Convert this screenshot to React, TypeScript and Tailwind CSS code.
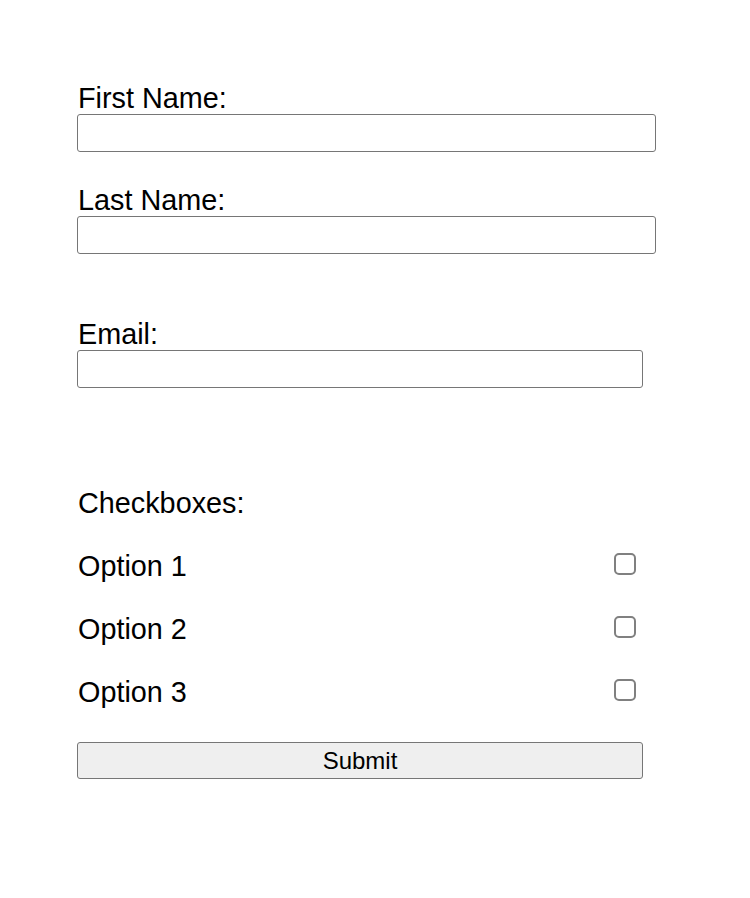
import React from "react";

function Box() {
  return <div className="w-[22px] h-[22px] border-2 border-[#808080] rounded-[5px] bg-white mr-[7px] -mt-[5px]" />;
}

export default function App() {
  return (
    <div className="min-h-[898px] bg-white text-black" style={{ fontFamily: '"Liberation Sans", Arial, sans-serif' }}>
      <form className="pl-[77px] pt-[82px] flex flex-col">
        <label className="text-[28.8px] leading-[32px] pl-px">First Name:</label>
        <input type="text" className="w-[579px] h-[38px] border border-[#767676] rounded-[3px] bg-white" />
        <label className="text-[28.8px] leading-[32px] pl-px mt-[32px]">Last Name:</label>
        <input type="text" className="w-[579px] h-[38px] border border-[#767676] rounded-[3px] bg-white" />
        <label className="text-[28.8px] leading-[32px] pl-px mt-[64px]">Email:</label>
        <input type="email" className="w-[566px] h-[38px] border border-[#767676] rounded-[3px] bg-white" />
        <div className="text-[28.8px] leading-[32px] pl-px mt-[99px]">Checkboxes:</div>
        <div className="w-[566px] flex flex-col mt-[31px] gap-[31px]">
          {["Option 1", "Option 2", "Option 3"].map((o) => (
            <div key={o} className="flex items-center justify-between h-[32px] pl-px">
              <span className="text-[28.8px] leading-[32px]">{o}</span>
              <Box />
            </div>
          ))}
        </div>
        <button type="button" className="mt-[34px] w-[566px] h-[37px] border border-[#767676] rounded-[3px] bg-[#efefef] text-[24px] leading-none">
          Submit
        </button>
      </form>
    </div>
  );
}
